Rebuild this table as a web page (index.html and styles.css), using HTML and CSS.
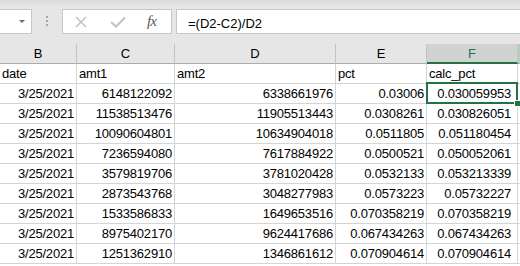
FILE: index.html
```html
<!DOCTYPE html>
<html lang="en">
    <head>
        <title>Book1 - Excel</title>
        <link rel="stylesheet" href="styles.css">
    </head>
    <body>
        <div class="toolbar">
            <div class="namebox"><span class="caret"></span></div>
            <div class="grip"><i></i><i></i><i></i></div>
            <div class="fxbox">
                <svg class="cancel" width="12" height="12" viewBox="0 0 12 12">
                    <path d="M1 1 L11 11 M11 1 L1 11" />
                </svg>
                <svg class="enter" width="16" height="12" viewBox="0 0 16 12">
                    <path d="M1 6 L6 10.5 L15 1.5" />
                </svg>
                <span class="fx">fx</span>
            </div>
            <div class="formula">=(D2-C2)/D2</div>
        </div>

        <div class="sheet">
            <div class="row head">
                <div class="cell">B</div>
                <div class="cell">C</div>
                <div class="cell">D</div>
                <div class="cell">E</div>
                <div class="cell active">F</div>
                <div class="cell edge"></div>
            </div>
            <div class="row">
                <div class="cell">date</div>
                <div class="cell">amt1</div>
                <div class="cell">amt2</div>
                <div class="cell">pct</div>
                <div class="cell">calc_pct</div>
                <div class="cell"></div>
            </div>
            <div class="row">
                <div class="cell num">3/25/2021</div>
                <div class="cell num">6148122092</div>
                <div class="cell num">6338661976</div>
                <div class="cell num">0.03006</div>
                <div class="cell num f selected">0.030059953</div>
                <div class="cell"></div>
            </div>
            <div class="row">
                <div class="cell num">3/25/2021</div>
                <div class="cell num">11538513476</div>
                <div class="cell num">11905513443</div>
                <div class="cell num">0.0308261</div>
                <div class="cell num f">0.030826051</div>
                <div class="cell"></div>
            </div>
            <div class="row">
                <div class="cell num">3/25/2021</div>
                <div class="cell num">10090604801</div>
                <div class="cell num">10634904018</div>
                <div class="cell num">0.0511805</div>
                <div class="cell num f">0.051180454</div>
                <div class="cell"></div>
            </div>
            <div class="row">
                <div class="cell num">3/25/2021</div>
                <div class="cell num">7236594080</div>
                <div class="cell num">7617884922</div>
                <div class="cell num">0.0500521</div>
                <div class="cell num f">0.050052061</div>
                <div class="cell"></div>
            </div>
            <div class="row">
                <div class="cell num">3/25/2021</div>
                <div class="cell num">3579819706</div>
                <div class="cell num">3781020428</div>
                <div class="cell num">0.0532133</div>
                <div class="cell num f">0.053213339</div>
                <div class="cell"></div>
            </div>
            <div class="row">
                <div class="cell num">3/25/2021</div>
                <div class="cell num">2873543768</div>
                <div class="cell num">3048277983</div>
                <div class="cell num">0.0573223</div>
                <div class="cell num f">0.05732227</div>
                <div class="cell"></div>
            </div>
            <div class="row">
                <div class="cell num">3/25/2021</div>
                <div class="cell num">1533586833</div>
                <div class="cell num">1649653516</div>
                <div class="cell num">0.070358219</div>
                <div class="cell num f">0.070358219</div>
                <div class="cell"></div>
            </div>
            <div class="row">
                <div class="cell num">3/25/2021</div>
                <div class="cell num">8975402170</div>
                <div class="cell num">9624417686</div>
                <div class="cell num">0.067434263</div>
                <div class="cell num f">0.067434263</div>
                <div class="cell"></div>
            </div>
            <div class="row">
                <div class="cell num">3/25/2021</div>
                <div class="cell num">1251362910</div>
                <div class="cell num">1346861612</div>
                <div class="cell num">0.070904614</div>
                <div class="cell num f">0.070904614</div>
                <div class="cell"></div>
            </div>
        </div>
    </body>
</html>
```

FILE: styles.css
```css
body {
    margin: 0;
    width: 520px;
    height: 266px;
    overflow: hidden;
    background: #e6e6e6;
    font-family: "Liberation Sans", Arial, sans-serif;
}

/* formula bar */
.toolbar {
    display: flex;
    align-items: flex-start;
    height: 44px;
    box-sizing: border-box;
    padding-top: 9px;
    background: linear-gradient(#d9d9d9, #e6e6e6 6px);
}

.namebox {
    width: 33px;
    height: 25px;
    margin-left: -1px;
    box-sizing: border-box;
    background: #fff;
    border: 1px solid #c6c6c6;
    position: relative;
}

.caret {
    position: absolute;
    left: 19px;
    top: 10px;
    border-left: 3px solid transparent;
    border-right: 3px solid transparent;
    border-top: 3px solid #6f6f6f;
}

.grip {
    width: 30px;
    display: flex;
    flex-direction: column;
    align-items: center;
    gap: 2px;
    padding-top: 7px;
}

.grip i {
    display: block;
    width: 2px;
    height: 2px;
    background: #a6a6a6;
}

.fxbox {
    width: 110px;
    height: 25px;
    box-sizing: border-box;
    background: #fff;
    border: 1px solid #c6c6c6;
    display: flex;
    align-items: center;
    padding-left: 12px;
}

.fxbox svg path {
    fill: none;
    stroke: #c4c4c4;
}

.cancel path {
    stroke-width: 1.6;
}

.enter {
    margin-left: 23px;
}

.enter path {
    stroke-width: 2.2;
}

.fx {
    margin-left: 21px;
    font-family: "Liberation Serif", serif;
    font-style: italic;
    font-size: 15px;
    color: #5a5a5a;
    letter-spacing: -1px;
}

.formula {
    flex: 1;
    height: 25px;
    margin-left: 4px;
    margin-right: -2px;
    box-sizing: border-box;
    background: #fff;
    border: 1px solid #c6c6c6;
    padding: 2px 0 0 11px;
    font-size: 13px;
    line-height: 23px;
    color: #000;
}

/* grid */
.sheet {
    height: 222px;
    overflow: hidden;
    background: #fff;
}

.row {
    display: grid;
    grid-template-columns: 77px 98px 161px 91px 91px 1fr;
}

.cell {
    height: 20px;
    box-sizing: border-box;
    border-right: 1px solid #d4d4d4;
    border-bottom: 1px solid #d4d4d4;
    padding: 2px 2px 0;
    font-size: 13px;
    letter-spacing: -0.2px;
    line-height: 16px;
    color: #000;
    white-space: nowrap;
    overflow: hidden;
}

.num {
    text-align: right;
}

.f {
    padding-right: 6px;
}

.head .cell {
    height: 20px;
    background: #e6e6e6;
    border-right-color: #c3c3c3;
    border-bottom: 1px solid #ababab;
    text-align: center;
    font-size: 13px;
    letter-spacing: 0;
    line-height: 19px;
    padding: 0;
}

.head .active {
    background: #d2d2d2;
    color: #217346;
    border-bottom: 2px solid #217346;
}

.head .edge {
    background: #a9d9be;
}

.selected {
    position: relative;
    overflow: visible;
}

.selected::after {
    content: "";
    position: absolute;
    left: -1px;
    right: -1px;
    top: -2px;
    bottom: -1px;
    border: 2px solid #217346;
}

.selected::before {
    content: "";
    position: absolute;
    right: -4px;
    bottom: -4px;
    width: 5px;
    height: 5px;
    background: #217346;
    border: 1px solid #fff;
    z-index: 1;
}
```
